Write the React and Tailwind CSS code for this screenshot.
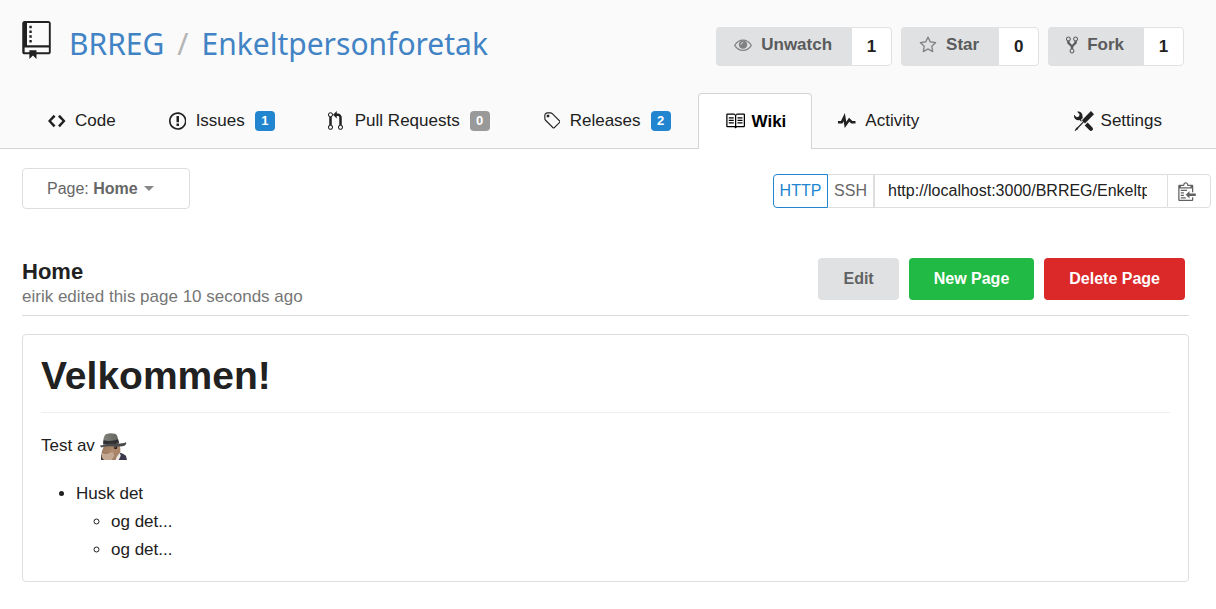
import React from "react";

const octicons = {
  repo: { w: 12, d: "M4 9H3V8h1v1zm0-3H3v1h1V6zm0-2H3v1h1V4zm0-2H3v1h1V2zm8-1v12c0 .55-.45 1-1 1H6v2l-1.5-1.5L3 16v-2H1c-.55 0-1-.45-1-1V1c0-.55.45-1 1-1h10c.55 0 1 .45 1 1zm-.8 10.200H1v2h2v-.9h3v.9h5.200v-2zm0-10.400H2v9.400h9.200V.8z" },
  code: { w: 14, d: "M9.5 3L8 4.5 11.5 8 8 11.5 9.5 13 14 8 9.5 3zm-5 0L0 8l4.5 5L6 11.5 2.5 8 6 4.5 4.5 3z" },
  issue: { w: 14, d: "M7 2.3c3.14 0 5.7 2.56 5.7 5.7s-2.56 5.7-5.7 5.7A5.71 5.71 0 0 1 1.3 8c0-3.14 2.56-5.7 5.7-5.7zM7 1C3.14 1 0 4.14 0 8s3.14 7 7 7 7-3.14 7-7-3.14-7-7-7zm1 3H6v5h2V4zm0 6H6v2h2v-2z" },
  pull: { w: 12, d: "M11 11.28V5c-.03-.78-.34-1.47-.94-2.06C9.46 2.35 8.78 2.03 8 2H7V0L4 3l3 3V4h1c.27.02.48.11.69.31.21.2.3.42.31.69v6.28A1.993 1.993 0 0 0 10 15a1.993 1.993 0 0 0 1-3.72zm-1 2.92c-.66 0-1.2-.55-1.2-1.2 0-.65.55-1.2 1.2-1.2.65 0 1.2.55 1.2 1.2 0 .65-.55 1.2-1.2 1.2zM4 3c0-1.11-.89-2-2-2a1.993 1.993 0 0 0-1 3.72v6.56A1.993 1.993 0 0 0 2 15a1.993 1.993 0 0 0 1-3.72V4.72c.59-.34 1-.98 1-1.72zm-.8 10c0 .66-.55 1.2-1.2 1.2-.65 0-1.2-.55-1.2-1.2 0-.65.55-1.2 1.2-1.2.65 0 1.2.55 1.2 1.2zM2 4.2C1.34 4.2.8 3.65.8 3c0-.65.55-1.2 1.2-1.2.65 0 1.2.55 1.2 1.2 0 .65-.55 1.2-1.2 1.2z" },
  fork: { w: 10, d: "M8 1a1.993 1.993 0 0 0-1 3.72V6L5 8 3 6V4.72A1.993 1.993 0 0 0 2 1a1.993 1.993 0 0 0-1 3.72V6.5l3 3v1.78A1.993 1.993 0 0 0 5 15a1.993 1.993 0 0 0 1-3.72V9.5l3-3V4.72A1.993 1.993 0 0 0 8 1zM2 4.2C1.34 4.2.8 3.65.8 3c0-.65.55-1.2 1.2-1.2.65 0 1.2.55 1.2 1.2 0 .65-.55 1.2-1.2 1.2zm3 10c-.66 0-1.2-.55-1.2-1.2 0-.65.55-1.2 1.2-1.2.65 0 1.2.55 1.2 1.2 0 .65-.55 1.2-1.2 1.2zm3-10c-.66 0-1.2-.55-1.2-1.2 0-.65.55-1.2 1.2-1.2.65 0 1.2.55 1.2 1.2 0 .65-.55 1.2-1.2 1.2z" },
  tag: { w: 14, d: "M7.73 1.73C7.26 1.26 6.62 1 5.96 1H3.5C2.13 1 1 2.13 1 3.5v2.47c0 .66.27 1.3.73 1.77l6.06 6.06c.39.39 1.02.39 1.41 0l4.59-4.59a.996.996 0 0 0 0-1.41L7.73 1.73zM2.38 7.09c-.31-.3-.47-.7-.47-1.13V3.5c0-.88.72-1.59 1.59-1.59h2.47c.42 0 .83.16 1.13.47l6.14 6.13-4.73 4.73-6.13-6.15zM3.01 3h2v2H3V3h.01z" },
  book: { w: 16, d: "M3 5h4v1H3V5zm0 3h4V7H3v1zm0 2h4V9H3v1zm11-5h-4v1h4V5zm0 2h-4v1h4V7zm0 2h-4v1h4V9zm2-6v9c0 .55-.45 1-1 1H9.5l-1 1-1-1H2c-.55 0-1-.45-1-1V3c0-.55.45-1 1-1h5.5l1 1 1-1H15c.55 0 1 .45 1 1zm-8 .5L7.5 3H2v9h6V3.5zm7-.5H9.5l-.5.5V12h6V3z" },
  pulse: { w: 14, d: "M11.5 8L8.8 5.4 6.6 8.5 5.5 1.6 2.38 8H0v2h3.6l.9-1.8.9 5.4L9 8.5l1.6 1.5H14V8h-2.5z" },
  tools: { w: 16, d: "M4.48 7.27c.26.26 1.28 1.33 1.28 1.33l.56-.58-.88-.91 1.69-1.8s-.76-.74-.43-.45c.32-1.19.03-2.51-.87-3.44C4.93.5 3.66.2 2.52.51l1.93 2-.51 1.96-1.89.52-1.93-1.98C-.19 4.17.1 5.48 1 6.4c.94.98 2.29 1.26 3.48.87zm6.44 1.94l-2.33 2.3 3.84 3.98c.31.33.73.49 1.14.49.41 0 .82-.16 1.14-.49.63-.65.63-1.7 0-2.35l-3.79-3.93zM16 2.53L13.55 0 6.33 7.46l.88.91-4.31 4.46-.99.53-1.39 2.27.35.37 2.2-1.44.51-1.02L7.9 9.08l.88.91L16 2.53z" },
  clippy: { w: 14, d: "M2 13h4v1H2v-1zm5-6H2v1h5V7zm2 3V8l-3 3 3 3v-2h5v-2H9zM4.5 9H2v1h2.5V9zM2 12h2.5v-1H2v1zm9 1h1v2c-.02.28-.11.52-.3.7-.19.18-.42.28-.7.3H1c-.55 0-1-.45-1-1V4c0-.55.45-1 1-1h3c0-1.11.89-2 2-2 1.11 0 2 .89 2 2h3c.55 0 1 .45 1 1v5h-1V6H1v9h10v-2zM2 5h8c0-.55-.45-1-1-1H8c-.55 0-1-.45-1-1s-.45-1-1-1-1 .45-1 1-.45 1-1 1H3c-.55 0-1 .45-1 1z" },
};

function Octicon({ name, className }) {
  const { w, d } = octicons[name];
  return (
    <svg viewBox={`0 0 ${w} 16`} fill="currentColor" aria-hidden="true" className={className}>
      <path d={d} />
    </svg>
  );
}

function Eye() {
  return (
    <svg viewBox="0 0 1792 1792" fill="currentColor" aria-hidden="true" className="h-[18px] w-[18px] text-[#808182]">
      <path d="M64 940q320-520 832-520t832 520q-320 500-832 500T64 940z" fill="none" stroke="currentColor" strokeWidth="120" />
      <circle cx="896" cy="860" r="420" />
      <path d="M690 830q10-170 190-190" fill="none" stroke="#e0e1e2" strokeWidth="90" strokeLinecap="round" />
    </svg>
  );
}

function Star() {
  return (
    <svg viewBox="0 0 1792 1792" fill="currentColor" aria-hidden="true" className="h-[18px] w-[18px] text-[#808182]">
      <path d="M1201 1004l306-297-422-62-189-382-189 382-422 62 306 297-73 421 378-199 377 199zm527-357q0 22-26 48l-363 354 86 500q1 7 1 20 0 50-41 50-19 0-40-12l-449-236-449 236q-22 12-40 12-21 0-31-14t-11-36q0-6 2-20l86-500-364-354q-25-27-25-48 0-37 56-46l502-73 225-455q19-41 49-41t49 41l225 455 502 73q56 9 56 46z" />
    </svg>
  );
}

function Squirrel() {
  return (
    <svg viewBox="0 0 26 26" role="img" aria-label="squirrel in a hat" className="ml-[5px] h-[27px] w-[27px]">
      <defs>
        <linearGradient id="fur" x1="0" x2="1" y1="0" y2="1">
          <stop offset="0" stopColor="#94755c" />
          <stop offset=".5" stopColor="#b08a6d" />
          <stop offset="1" stopColor="#9a7860" />
        </linearGradient>
        <linearGradient id="felt" x1="0" x2="1">
          <stop offset="0" stopColor="#84847d" />
          <stop offset="1" stopColor="#62625c" />
        </linearGradient>
      </defs>
      <path d="M17 18l5 2 3 2 1 4H14z" fill="#3a394c" />
      <path d="M1 21l2-1 3 6H1z" fill="#33333a" />
      <path d="M4 12h15c1 4 1 7-1 10l-3 4H4c-3-2-3-6-2-9z" fill="url(#fur)" />
      <path d="M2 19c3 2 6 1 10-1l2 4-3 4H4c-2-2-3-4-2-7z" fill="#c4a893" />
      <path d="M2 18c2 2 5 2 7 0" fill="none" stroke="#8a6b58" strokeWidth=".6" />
      <path d="M16 23l3-4 1 3-2 4h-3z" fill="#ebe8e6" />
      <ellipse cx="15" cy="14" rx="1.600" ry="1.700" fill="#241c1a" />
      <circle cx="14.600" cy="13.500" r=".5" fill="#d9d0c8" />
      <path d="M3 10C3 6 4 2 6 1c3-1 6-1 9 0 2 1 2 4 3 8z" fill="url(#felt)" />
      <path d="M3.500 7c4 1 9 1 14-1l1 4c-5 1-10 1-15.500 1z" fill="#303134" />
      <path d="M0 12c3 0 6-2 10-2 5 0 10 1 15-1 1 2-1 4-5 4-7 0-14-1-19 1z" fill="#4a4b4a" />
    </svg>
  );
}

function RepoAction({ icon, label, count }) {
  return (
    <div className="flex h-[39px] text-[17px] font-bold">
      <button type="button" className="flex items-center gap-[9px] rounded-l bg-[#e0e1e2] pb-[3px] pl-[18px] pr-[19px] text-[#5a5b5c]">
        {icon}
        {label}
      </button>
      <a href="#count" className="flex w-[41px] items-center justify-center rounded-r border border-[#e0e1e2] bg-white text-[#212121]">
        {count}
      </a>
    </div>
  );
}

function Tab({ icon, label, badge, badgeGray, active, end }) {
  return (
    <a
      href={"#" + icon}
      className={
        "flex h-[56px] items-center gap-[7px] pl-[26px] text-[17px] " +
        (active
          ? "rounded-t border border-b-0 border-[#d4d4d5] bg-white pr-[25px] font-bold text-black"
          : "pr-[27px] text-[#212121]") +
        (end ? " ml-auto" : "")
      }
    >
      <span className="flex w-[20px] pb-px">
        <Octicon name={icon} className="h-[20px] w-auto" />
      </span>
      {label}
      {badge !== undefined && (
        <span className={"ml-[3px] flex h-[20px] w-[20px] items-center justify-center rounded text-[13px] font-bold text-white " + (badgeGray ? "bg-[#999999]" : "bg-[#2185d0]")}>
          {badge}
        </span>
      )}
    </a>
  );
}

export default function App() {
  return (
    <div className="min-h-screen bg-white font-['Liberation_Sans',Arial,sans-serif] text-[17px] text-[#212121]">
      <header className="border-b border-[#d4d4d5] bg-[#fafafa]">
        <div className="flex h-[93px] items-start justify-between pl-[22px] pr-8">
          <h1 className="flex items-start pt-[21px] font-['Noto_Sans','Open_Sans',sans-serif] text-[30px] leading-[46px] text-[#4183c4]">
            <Octicon name="repo" className="mr-[18px] h-[38px] w-[29px] text-[#212121]" />
            <a href="#owner">BRREG</a>
            <span className="mx-[13px] text-[#b5b5b5]">/</span>
            <a href="#repo">Enkeltpersonforetak</a>
          </h1>
          <div className="flex gap-[9px] pt-[27px]">
            <RepoAction icon={<Eye />} label="Unwatch" count="1" />
            <RepoAction icon={<Star />} label="Star" count="0" />
            <RepoAction icon={<Octicon name="fork" className="h-[20px] w-[12px]" />} label="Fork" count="1" />
          </div>
        </div>
        <nav className="flex h-[55px] items-start pl-[22px] pr-[27px]">
          <Tab icon="code" label="Code" />
          <Tab icon="issue" label="Issues" badge="1" />
          <Tab icon="pull" label="Pull Requests" badge="0" badgeGray />
          <Tab icon="tag" label="Releases" badge="2" />
          <Tab icon="book" label="Wiki" active />
          <Tab icon="pulse" label="Activity" />
          <Tab icon="tools" label="Settings" end />
        </nav>
      </header>

      <main className="pl-[22px] pr-[27px] pt-[19px]">
        <div className="-mr-[22px] flex items-start justify-between text-[16px]">
          <button type="button" className="flex h-[41px] w-[168px] items-center rounded border border-[#dededf] pl-6 text-[#666666]">
            <span>
              Page: <strong>Home</strong>
            </span>
            <svg viewBox="0 0 10 5" aria-hidden="true" className="ml-[6px] h-[5px] w-[10px]">
              <path d="M0 0h10L5 5z" fill="#888888" />
            </svg>
          </button>
          <div className="mt-[6px] flex h-[34px]">
            <button type="button" className="w-[55px] rounded-l border border-[#2185d0] text-[#2185d0]">HTTP</button>
            <button type="button" className="w-[46px] border-y border-r border-[#dededf] text-[#666666]">SSH</button>
            <input
              aria-label="Clone URL"
              readOnly
              defaultValue="http://localhost:3000/BRREG/Enkeltpersonforetak.wiki.git"
              className="w-[293px] border-y border-l border-[#dededf] pl-[13px] pr-[20px] text-[#212121]"
            />
            <button type="button" aria-label="Copy" className="flex w-[44px] items-center justify-center rounded-r border border-[#dededf] pb-px pr-1 text-[#606162]">
              <Octicon name="clippy" className="h-[20px] w-[18px]" />
            </button>
          </div>
        </div>

        <div className="mt-[49px] flex items-start justify-between border-b border-[#dcdcdd] pb-[7px] pr-1">
          <div>
            <h2 className="text-[22px] font-bold leading-[28px]">Home</h2>
            <p className="leading-[22px] text-[#767676]">eirik edited this page 10 seconds ago</p>
          </div>
          <div className="flex h-[42px] gap-[10px] text-[16px] font-bold text-white">
            <button type="button" className="rounded bg-[#e0e1e2] px-[25px] text-[#606162]">Edit</button>
            <button type="button" className="rounded bg-[#21ba45] px-[25px]">New Page</button>
            <button type="button" className="rounded bg-[#db2828] px-[25px]">Delete Page</button>
          </div>
        </div>

        <article className="mt-[18px] rounded border border-[#dededf] px-[18px] pb-[17px] pt-[17px] leading-[28px]">
          <h1 className="border-b border-[#eeeeee] pb-[12px] text-[39px] font-bold leading-[48px]">Velkommen!</h1>
          <p className="mt-[18px] flex h-[30px] items-center">
            Test av
            <Squirrel />
          </p>
          <ul className="mt-[19px] list-disc pl-[35px]">
            <li>
              Husk det
              <ul className="list-[circle] pl-[35px]">
                <li>og det...</li>
                <li>og det...</li>
              </ul>
            </li>
          </ul>
        </article>
      </main>
    </div>
  );
}
